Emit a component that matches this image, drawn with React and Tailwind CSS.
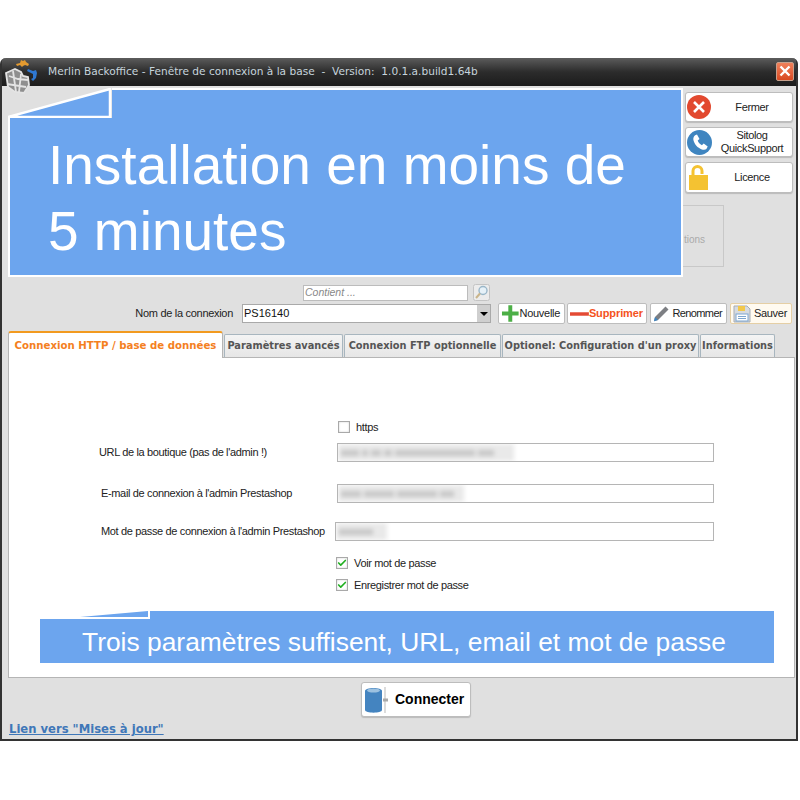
import { Check } from 'lucide-react';

const sans = "font-['Liberation_Sans',Arial,sans-serif]";
const deja = "font-['DejaVu_Sans',Verdana,sans-serif]";

const AppLogo = () => (
  <svg width="34" height="34" viewBox="0 0 34 34" className="absolute left-[3px] top-[2px] z-20">
    <path d="M1 13l9-4 6 3 2 4 5 1 1 8-5 8-9-1-7-5z" fill="#8f8f8f" />
    <g fill="none" stroke="#e4e4e4" strokeWidth="1.800">
      <path d="M1 13l9-4 6 3 2 4 5 1 1 8-5 8-9-1-7-5z" />
      <path d="M4 16l9 3 10 1M8 11l3 21M16 14l-2 18M2 24l19 3" />
    </g>
    <path d="M11 4l4-1 1-3 2 1 2-1 1 2 3 2-1 2-3-1-2 1-1 1-2-2-3 1z" fill="#e39a30" />
    <path d="M23 9l5 2 3-1 1 3-1 5-3 3-2-2 2-1v-4l-6-3z" fill="#2f78d2" />
  </svg>
);

const FermerIcon = () => (
  <svg width="24" height="24" viewBox="0 0 24 24">
    <circle cx="12" cy="12" r="12" fill="#e2492f" />
    <path d="M7 7l10 10M17 7L7 17" stroke="#fff" strokeWidth="2.600" />
  </svg>
);

const PhoneIcon = () => (
  <svg width="25" height="25" viewBox="0 0 25 25">
    <circle cx="12.500" cy="12.500" r="12.500" fill="#3f85c0" />
    <path d="M7.500 5.500l2.500-1 2.500 4.500-1.800 1.600c.6 2 2.200 3.800 4.200 4.600l1.800-1.600 4 3-1.300 2.400c-1 1-3 1-4.500.4-4.400-1.600-7.500-5-8.500-9.400-.3-1.800.2-3.500 1.600-4.500z" fill="#fff" />
  </svg>
);

const LockIcon = () => (
  <svg width="20" height="25" viewBox="0 0 20 25">
    <path d="M4 11V6a4.500 4.500 0 0 1 9 0v3" fill="none" stroke="#f4c232" strokeWidth="3" />
    <rect x="0" y="10" width="19" height="15" fill="#f4c232" />
  </svg>
);

const SearchIcon = () => (
  <svg width="17" height="17" viewBox="0 0 17 17">
    <rect x="0.500" y="0.500" width="16" height="16" rx="2" fill="#ececec" stroke="#c4c4c4" />
    <circle cx="10" cy="6.500" r="4" fill="#e6f1f8" stroke="#9ab7c9" strokeWidth="1.400" />
    <path d="M7 9.500L3 14" stroke="#c9b48a" strokeWidth="2" />
  </svg>
);

const PlusIcon = () => (
  <svg width="19" height="19" viewBox="0 0 19 19">
    <path d="M9.500 1v17M1 9.500h17" stroke="#4caf46" strokeWidth="4" />
  </svg>
);

const MinusIcon = () => (
  <svg width="19" height="8" viewBox="0 0 19 8">
    <path d="M0 4h19" stroke="#e44a33" strokeWidth="3.500" />
  </svg>
);

const PencilIcon = () => (
  <svg width="17" height="17" viewBox="0 0 17 17">
    <path d="M12.500 1.500l3 3L5 15l-4 1.200L2 12z" fill="#7d7f83" />
    <path d="M2 12l3 3-4 1.200z" fill="#3c85c4" />
  </svg>
);

const SaveIcon = () => (
  <svg width="18" height="18" viewBox="0 0 18 18">
    <path d="M1 1h13l3 3v13H1z" fill="#d7dbe0" stroke="#a7adb5" />
    <rect x="5" y="1" width="7" height="5" fill="#f2c84b" />
    <rect x="3" y="9" width="12" height="7" fill="#fff" stroke="#7ea6cf" />
    <path d="M5 11.500h8M5 13.500h8" stroke="#7ea6cf" />
  </svg>
);

const DbIcon = () => (
  <svg width="24" height="26" viewBox="0 0 24 26">
    <path d="M1 4c0-4 17-4 17 0v19c0 3.500-17 3.500-17 0z" fill="#4484c0" />
    <ellipse cx="9.500" cy="3.500" rx="6.500" ry="2" fill="#9cc1e0" />
    <path d="M21 0v26" stroke="#b9b9b9" />
    <path d="M19 13h5" stroke="#a9a9a9" strokeWidth="3" />
  </svg>
);

const SideButton = ({ icon, h, children }) => (
  <div className={`${h} flex items-center bg-white border border-[#bdbdbd] rounded-[3px] shadow-[0_1px_1px_#bbb]`}>
    <div className="w-[26px] flex justify-center shrink-0">{icon}</div>
    <div className="flex-1 text-center text-[11px] leading-[13px] tracking-[-0.35px] text-[#222]">{children}</div>
  </div>
);

const ToolButton = ({ icon, w, className = '', children }) => (
  <div className={`${w} h-[21px] flex items-center justify-between pl-[2px] pr-[4px] bg-white border border-[#bdbdbd] rounded-[2px] text-[11px] tracking-[-0.3px] text-[#222] ${className}`}>
    {icon}
    <span>{children}</span>
  </div>
);

const Tab = ({ w, children }) => (
  <div className={`${w} h-[23px] flex items-center justify-center whitespace-nowrap bg-gradient-to-b from-[#f4f4f4] to-[#e6e6e6] border border-b-0 border-[#a8b6bf] rounded-t-[2px] text-[9.800px] font-bold text-[#555]`}>
    {children}
  </div>
);

const Field = ({ label, labelW, pad, gap, blur }) => (
  <div className={`flex items-center ${gap} ${pad}`}>
    <div className={`${labelW} text-[11px] tracking-[-0.35px] whitespace-nowrap text-[#222] leading-none`}>{label}</div>
    <div className="flex-1 h-[19px] bg-white border border-[#b5b5b5] flex overflow-hidden">
      {blur}
    </div>
  </div>
);

const Blurred = ({ w, bits }) => (
  <div className={`${w} h-full bg-[#e9e9e9] blur-[2px] flex items-center gap-[3px] px-[3px]`}>
    {bits.map((b, i) => (
      <div key={i} className="h-[6px] bg-[#c8c8c8]" style={{ width: b }} />
    ))}
  </div>
);

const CheckRow = ({ checked, className = '', children }) => (
  <div className={`flex items-center gap-[6px] ${className}`}>
    <div className="w-[12px] h-[12px] bg-white border border-[#a9a9a9] flex items-center justify-center shadow-[inset_0_0_2px_#ccc]">
      {checked && <Check className="w-[10px] h-[10px] text-[#22b022]" strokeWidth={4} />}
    </div>
    <span className="text-[11px] tracking-[-0.35px] text-[#222] leading-none">{children}</span>
  </div>
);

export default function App() {
  return (
    <div className={`w-[800px] h-[800px] bg-white pt-[58px] overflow-hidden ${sans}`}>
      <div className="relative w-[798px] h-[683px] bg-[#e0e0e0] border-x-2 border-b-2 border-[#333] rounded-t-[6px] flex flex-col">
        {/* title bar */}
        <div className="h-[28px] shrink-0 flex items-center justify-between bg-gradient-to-b from-[#5c5c5c] via-[#2c2c2c] to-[#1c1c1c] rounded-t-[4px] pl-[46px] pr-[2px]">
          <span className={`${deja} text-[10.600px] whitespace-pre text-[#c6d4dc]`}>Merlin Backoffice - Fenêtre de connexion à la base  -  Version:  1.0.1.a.build1.64b</span>
          <div className="w-[18px] h-[19px] mt-[-2px] rounded-[2px] bg-gradient-to-b from-[#f0805a] to-[#d8481f] border border-[#c7a08c] flex items-center justify-center">
            <svg width="12" height="12" viewBox="0 0 12 12"><path d="M1.500 1.500l9 9M10.500 1.500l-9 9" stroke="#fff" strokeWidth="2.400" /></svg>
          </div>
        </div>
        <AppLogo />

        <div className="flex-1 flex flex-col pl-[6px] pr-[1px]">
          {/* top zone */}
          <div className="h-[198px] shrink-0 flex justify-end pt-[6px] pr-[2px]">
            <div className="w-[108px] flex flex-col gap-[5px]">
              <SideButton icon={<FermerIcon />} h="h-[30px]">Fermer</SideButton>
              <SideButton icon={<PhoneIcon />} h="h-[30px]">Sitolog<br />QuickSupport</SideButton>
              <SideButton icon={<LockIcon />} h="h-[31px]">Licence</SideButton>
              <div className="w-[74px] h-[62px] ml-[-35px] mt-[7px] border border-[#c8c8c8] flex items-center justify-end pt-[6px] pr-[18px] text-[10px] text-[#aaa]">tions</div>
            </div>
          </div>

          {/* search row */}
          <div className="h-[17px] shrink-0 flex items-center pl-[295px] gap-[5px]">
            <div className="w-[165px] h-[16px] bg-white border border-[#bcbcbc] pl-[1px] flex items-center text-[10.500px] italic text-[#888]">Contient ...</div>
            <SearchIcon />
          </div>

          {/* connection row */}
          <div className="h-[21px] mt-[2px] shrink-0 flex items-center">
            <div className="w-[225px] text-right text-[11px] tracking-[-0.3px] text-[#222]">Nom de la connexion</div>
            <div className="w-[249px] ml-[9px] h-[19px] bg-white border border-[#a9a9a9] flex items-center justify-between pl-[1px] text-[11px] text-[#111]">
              PS16140
              <div className="w-[13px] h-[17px] bg-[#cfcfcf] flex items-center justify-center">
                <div className="w-0 h-0 border-x-[4px] border-x-transparent border-t-[4px] border-t-black" />
              </div>
            </div>
            <div className="flex ml-[7px] gap-[2px]">
              <ToolButton icon={<PlusIcon />} w="w-[67px]">Nouvelle</ToolButton>
              <ToolButton icon={<MinusIcon />} w="w-[80px]" className="font-bold !text-[#f4521d] !tracking-[-0.1px] !pr-[3px]">Supprimer</ToolButton>
              <ToolButton icon={<PencilIcon />} w="w-[77px]" className="ml-[1px] !tracking-[-0.6px]">Renommer</ToolButton>
              <ToolButton icon={<SaveIcon />} w="w-[62px]" className="ml-[1px] !border-[#e5cfa5] !bg-[#fffaf0]">Sauver</ToolButton>
            </div>
          </div>

          {/* tabs */}
          <div className={`h-[26px] mt-[7px] shrink-0 flex items-end gap-[1px] ${deja}`}>
            <div className="w-[215px] h-[27px] relative z-10 mb-[-1px] flex items-center justify-center whitespace-nowrap bg-white border-x border-[#b5b5b5] border-t-2 border-t-[#f29a1f] rounded-t-[3px] text-[10.200px] font-bold text-[#f4801e]">
              Connexion HTTP / base de données
            </div>
            <Tab w="w-[119px]">Paramètres avancés</Tab>
            <Tab w="w-[157px]">Connexion FTP optionnelle</Tab>
            <Tab w="w-[197px]">Optionel: Configuration d'un proxy</Tab>
            <Tab w="w-[75px]">Informations</Tab>
          </div>

          {/* panel */}
          <div className="h-[321px] shrink-0 bg-white border border-[#b5b5b5] flex flex-col pt-[63px]">
            <CheckRow className="pl-[329px]">https</CheckRow>
            <Field label="URL de la boutique (pas de l'admin !)" labelW="w-[238px]" pad="pl-[90px] pr-[80px]" gap="mt-[10px]"
              blur={<Blurred w="w-[176px]" bits={[18, 6, 10, 8, 80, 16]} />} />
            <Field label="E-mail de connexion à l'admin Prestashop" labelW="w-[236px]" pad="pl-[92px] pr-[80px]" gap="mt-[22px]"
              blur={<Blurred w="w-[126px]" bits={[20, 30, 40, 14]} />} />
            <Field label="Mot de passe de connexion à l'admin Prestashop" labelW="w-[234px]" pad="pl-[92px] pr-[80px]" gap="mt-[19px]"
              blur={<Blurred w="w-[51px]" bits={[34]} />} />
            <CheckRow checked className="pl-[327px] mt-[16px]">Voir mot de passe</CheckRow>
            <CheckRow checked className="pl-[327px] mt-[10px]">Enregistrer mot de passe</CheckRow>
          </div>

          {/* connect */}
          <div className="shrink-0 pl-[353px] mt-[4px]">
            <div className="w-[110px] h-[35px] bg-white border border-[#bdbdbd] rounded-[3px] shadow-[0_1px_1px_#bbb] flex items-center pl-[2px] gap-[7px] text-[14px] font-bold text-black">
              <DbIcon />
              Connecter
            </div>
          </div>

          {/* link */}
          <div className={`${deja} mt-[4px] ml-[1px] text-[11.600px] font-bold text-[#3f77b8] underline`}>Lien vers "Mises à jour"</div>
        </div>

        {/* overlays */}
        <div className="absolute left-[6px] top-[30px] w-[675px] h-[189px] bg-[#6ca5ee] border-[2.500px] border-white text-white">
          <svg width="104" height="30" viewBox="0 0 104 30" className="absolute left-[-2.500px] top-[-2.500px]">
            <rect width="104" height="30" fill="#e0e0e0" />
            <path d="M0 29L102 1V29Z" fill="#6ca5ee" stroke="#fff" strokeWidth="2.500" />
          </svg>
          <div className="pl-[38px] pt-[42px] text-[55px] leading-[66px]">Installation en moins de<br />5 minutes</div>
        </div>
        <div className="absolute left-[38px] top-[553px] w-[734px] h-[52px] bg-[#6ca5ee] text-white">
          <svg width="110" height="8" viewBox="0 0 110 8" className="absolute left-0 top-0">
            <rect width="110" height="8" fill="#fff" />
            <path d="M40 6L108 0V6Z" fill="#6ca5ee" />
          </svg>
          <div className="pl-[42px] pt-[15px] text-[26.400px] leading-[32px] whitespace-nowrap">Trois paramètres suffisent, URL, email et mot de passe</div>
        </div>
      </div>
    </div>
  );
}
